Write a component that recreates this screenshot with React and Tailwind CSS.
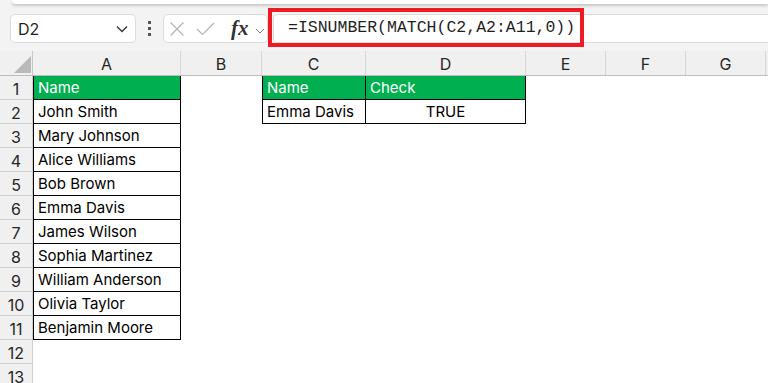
import React from 'react';

const cols = [
    { key: 'A', w: 148 },
    { key: 'B', w: 81 },
    { key: 'C', w: 104 },
    { key: 'D', w: 160 },
    { key: 'E', w: 80 },
    { key: 'F', w: 80 },
    { key: 'G', w: 80 },
];

const names = [
    'John Smith',
    'Mary Johnson',
    'Alice Williams',
    'Bob Brown',
    'Emma Davis',
    'James Wilson',
    'Sophia Martinez',
    'William Anderson',
    'Olivia Taylor',
    'Benjamin Moore',
];

// cell content by [row][col]
const cells = {};
cells['1A'] = { text: 'Name', head: true };
names.forEach((n, i) => { cells[`${i + 2}A`] = { text: n }; });
cells['1C'] = { text: 'Name', head: true };
cells['1D'] = { text: 'Check', head: true };
cells['2C'] = { text: 'Emma Davis' };
cells['2D'] = { text: 'TRUE', center: true };

const inTable = (r, c) =>
    (c === 'A' && r >= 1 && r <= 11) || ((c === 'C' || c === 'D') && r >= 1 && r <= 2);

const FormulaBar = () => (
    <div className="relative h-[51px] bg-[#f3f3f3] shrink-0">
        {/* ribbon panel edge */}
        <div className="ml-[12px] h-[4px] bg-white rounded-bl-[6px] shadow-[0_2px_3px_rgba(0,0,0,0.18)]"></div>

        <div className="flex items-center mt-[10px] h-[29px]">
            {/* name box */}
            <div className="ml-[10px] w-[126px] h-[29px] bg-white border border-[#dcdcdc] rounded-[5px] flex items-center justify-between pl-[7px] pr-[7px]">
                <span className="text-[16px] text-[#1f1f1f]">D2</span>
                <svg width="12" height="8" viewBox="0 0 12 8">
                    <polyline points="1,1.5 6,6.5 11,1.5" fill="none" stroke="#333" strokeWidth="1.3" />
                </svg>
            </div>

            {/* dots */}
            <div className="w-[27px] flex flex-col items-center gap-[3px]">
                <div className="w-[3px] h-[3px] bg-[#555]"></div>
                <div className="w-[3px] h-[3px] bg-[#555]"></div>
                <div className="w-[3px] h-[3px] bg-[#555]"></div>
            </div>

            {/* cancel / enter / fx */}
            <div className="w-[105px] h-[29px] bg-white border border-[#dcdcdc] rounded-[5px] flex items-center pl-[5px]">
                <svg width="16" height="16" viewBox="0 0 16 16">
                    <path d="M1.5 1.5 L14.5 14.5 M14.5 1.5 L1.5 14.5" stroke="#b4b4b4" strokeWidth="1.2" />
                </svg>
                <svg width="19" height="14" viewBox="0 0 19 14" className="ml-[11px]">
                    <polyline points="1,7 6.5,12.5 18,1" fill="none" stroke="#b4b4b4" strokeWidth="1.2" />
                </svg>
                <span className="ml-[16px] italic font-bold text-[21px] leading-none text-[#333]" style={{ fontFamily: '"Liberation Serif", serif' }}>fx</span>
                <svg width="10" height="6" viewBox="0 0 10 6" className="ml-[6px] mt-[4px]">
                    <polyline points="1,1 5,5 9,1" fill="none" stroke="#777" strokeWidth="1" />
                </svg>
            </div>

            {/* formula input */}
            <div className="ml-[5px] flex-1 h-[29px] bg-white border-y border-l border-[#dcdcdc] rounded-l-[5px] flex items-center pl-[14px]">
                <span className="text-[16.5px] text-[#1f1f1f] whitespace-nowrap" style={{ fontFamily: '"Liberation Mono", monospace' }}>
                    =ISNUMBER(MATCH(C2,A2:A11,0))
                </span>
            </div>
        </div>

        {/* red highlight annotation */}
        <div className="absolute left-[268px] top-[8px] w-[316px] h-[39px] border-[4px] border-[#ed1c24]"></div>
    </div>
);

const ColumnHeaders = () => (
    <div className="flex h-[25px] shrink-0 bg-[#f0f0f0] border-b border-[#bdbdbd]">
        <div className="relative w-[33px] shrink-0 border-r border-[#c6c6c6]">
            <svg width="17" height="17" viewBox="0 0 17 17" className="absolute left-[14px] top-[5px]">
                <polygon points="17,0 17,17 0,17" fill="#b9b9b9" />
            </svg>
        </div>
        {cols.map(c => (
            <div
                key={c.key}
                style={{ width: c.w }}
                className="shrink-0 border-r border-[#d6d6d6] flex items-center justify-center pt-[2px] text-[16px] text-[#262626]"
            >
                {c.key}
            </div>
        ))}
        <div className="flex-1"></div>
    </div>
);

const Row = ({ r }) => (
    <div className="flex h-[24px] shrink-0">
        <div className="w-[33px] shrink-0 bg-[#f0f0f0] border-r border-b border-[#cfcfcf] flex items-center justify-center pt-[2px] text-[16px] text-[#262626]">
            {r}
        </div>
        {cols.map(c => {
            const cell = cells[`${r}${c.key}`];
            const t = inTable(r, c.key);
            const first = t && (c.key === 'A' || c.key === 'C');
            return (
                <div
                    key={c.key}
                    style={{ width: c.w }}
                    className={`shrink-0 flex items-center px-[4px] pt-[2px] text-[15px] whitespace-nowrap overflow-hidden ${t ? 'border-r border-b border-black' : ''} ${first ? 'border-l' : ''} ${cell && cell.head ? 'bg-[#00b050] text-white' : 'text-black'} ${cell && cell.center ? 'justify-center' : ''}`}
                >
                    {cell ? cell.text : ''}
                </div>
            );
        })}
    </div>
);

const App = () => {
    const rows = Array.from({ length: 13 }, (_, i) => i + 1);
    return (
        <div className="w-[768px] h-[383px] overflow-hidden bg-white flex flex-col" style={{ fontFamily: 'Inter, "Noto Sans", sans-serif' }}>
            <FormulaBar />
            <ColumnHeaders />
            {rows.map(r => (
                <Row key={r} r={r} />
            ))}
        </div>
    );
};

export default App;
